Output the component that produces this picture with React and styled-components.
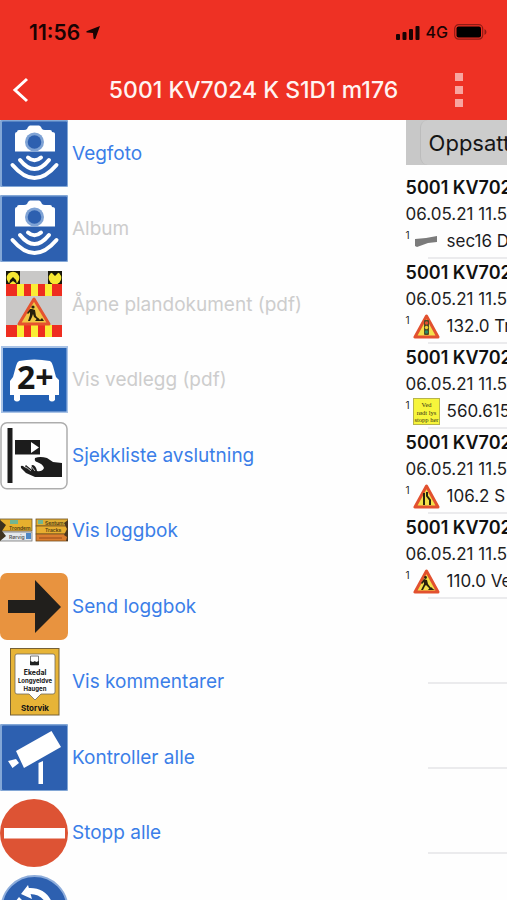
import React from 'react';
import styled, { createGlobalStyle } from 'styled-components';

const GlobalStyle = createGlobalStyle`
  * { box-sizing: border-box; }
  body {
    margin: 0;
    background: #fefefe;
    font-family: Inter, "Liberation Sans", sans-serif;
    color: #1c1c1e;
  }
  button { font: inherit; border: 0; background: none; padding: 0; cursor: pointer; }
  svg { display: block; flex: none; }
`;

const Screen = styled.div`
  display: flex;
  flex-direction: column;
  height: 100vh;
  overflow: hidden;
`;

const Header = styled.header`
  flex: none;
  background: #ee3124;
`;

const StatusBar = styled.div`
  display: flex;
  align-items: center;
  justify-content: space-between;
  height: 60px;
  padding: 4px 20px 0 29px;
  color: #1a0303;
`;

const StatusGroup = styled.div`
  display: flex;
  align-items: center;
  gap: 6px;
`;

const Clock = styled.time`
  font-size: 21px;
  font-weight: 600;
`;

const Network = styled.span`
  font-size: 16px;
  font-weight: 500;
`;

const NavBar = styled.div`
  display: grid;
  grid-template-columns: 80px 1fr 80px;
  align-items: center;
  height: 60px;
`;

const NavButton = styled.button`
  display: flex;
  align-items: center;
  justify-content: ${(p) => (p.$end ? 'center' : 'flex-start')};
  height: 44px;
  padding: ${(p) => (p.$end ? '0 16px 0 0' : '0 0 0 12px')};
`;

const Title = styled.h1`
  margin: 0;
  color: #fff4f2;
  font-size: 23px;
  font-weight: 500;
  text-align: center;
  white-space: nowrap;
`;

const Body = styled.div`
  display: flex;
  flex: 1;
  min-height: 0;
  overflow: hidden;
`;

const Drawer = styled.nav`
  flex: 0 0 80%;
  overflow: hidden;
`;

const Menu = styled.ul`
  margin: 0;
  padding: 0;
  list-style: none;
`;

const MenuRow = styled.li`
  height: 75px;
  &:nth-child(even) { height: 76px; }
`;

const MenuButton = styled.button`
  display: flex;
  align-items: center;
  gap: 4px;
  width: 100%;
  height: 68px;
  color: #3b7ee8;
  font-size: 19px;
  line-height: 28px;
  text-align: left;
  &:disabled { color: #cdcdcd; cursor: default; }
`;

const Content = styled.main`
  flex: 0 0 100%;
`;

const Segments = styled.div`
  height: 45px;
  margin-bottom: 9px;
  padding-left: 14px;
  background: #c8c8c8;
`;

const Segment = styled.button`
  width: 240px;
  height: 45px;
  padding-left: 8px;
  border-left: 1px solid #bcbcbc;
  border-radius: 8px;
  background: #cccccc;
  color: #161616;
  font-size: 22px;
  text-align: left;
`;

const Records = styled.ul`
  margin: 0;
  padding: 0;
  list-style: none;
`;

const Record = styled.li`
  display: flow-root;
  height: 85px;
  font-size: 17px;
  line-height: 27px;
  white-space: nowrap;
  &::after {
    content: "";
    display: block;
    height: 2px;
    margin: ${(p) => (p.$empty ? 83 : 2)}px 0 0 22px;
    background: #ebebed;
  }
`;

const RecordTitle = styled.div`
  height: 27px;
  font-size: 18px;
  font-weight: 600;
  color: #111;
`;

const RecordDate = styled.div`
  color: #222;
`;

const RecordSign = styled.div`
  display: flex;
  align-items: center;
  height: 27px;
  gap: 3px;
`;

const Count = styled.span`
  align-self: flex-start;
  width: 4px;
  font-size: 10px;
  line-height: 14px;
`;

const SignName = styled.span`
  padding-left: 4px;
`;

const Icon = ({ children, size = 68, box = 68 }) => (
  <svg width={size} height={size} viewBox={`0 0 ${box} ${box}`} aria-hidden="true">{children}</svg>
);

const BluePlate = () => (
  <>
    <rect width="68" height="67" rx="1" fill="#83a7d6" />
    <rect x="2" y="1.500" width="65" height="64.500" rx="1" fill="#2d60b0" />
  </>
);

const CameraIcon = () => (
  <Icon>
    <BluePlate />
    <path d="M15 14q0-2 2-2 0-2 2-2h5q2 0 3-1l1-2q1-1.500 2-1.500h9q1 0 2 1.500l1 2q1 1 3 1h5q2 0 2 2 3 0 3 2v17.500H15z" fill="#fff" />
    <circle cx="34.500" cy="22" r="9.500" fill="#7fa3d5" />
    <circle cx="34.500" cy="22" r="6.800" fill="#2d60b0" />
    <g fill="none" stroke="#fff" strokeWidth="4" strokeLinecap="round">
      <path d="M28 37.500q6.500 5.500 13 0" />
      <path d="M20 40q14.500 18 29 0" />
      <path d="M12.500 45q22 26 44 0" />
    </g>
  </Icon>
);

const Digger = () => (
  <g fill="#28200c">
    <circle cx="33" cy="36" r="1.600" />
    <path d="M32 38l3 1 1 6 3 3-1 1-4-3-1-3-1 3-2 4h-2l2-6 0-3-2 2-1-1 3-4z" />
    <path d="M35 50q3-5 5-1l2-2 2 3z" />
  </g>
);

const BarrierIcon = () => (
  <Icon>
    <rect x="6" width="56" height="66" fill="#c9c8c7" />
    <path d="M6 0h14v14H6zM48 0h14v14H48z" fill="#18170a" />
    <circle cx="13" cy="7" r="6.300" fill="#f6e832" />
    <circle cx="55" cy="7" r="6.300" fill="#f6e832" />
    <path d="M9 13l1-4 3-3 3 3 1 4-4-3zM51 0l1 2 3 3 3-3 1-2z" fill="#18170a" />
    {[13, 54].map((y) => (
      <g key={y}>
        <rect x="6" y={y} width="56" height="12" fill="#ee2d20" />
        <path d={`M17 ${y}h7v12h-7zM31 ${y}h7v12h-7zM45 ${y}h7v12h-7z`} fill="#faed35" />
      </g>
    ))}
    <path d="M34 28L19 53h30z" fill="#f1c744" stroke="#e5532f" strokeWidth="3" strokeLinejoin="round" />
    <Digger />
  </Icon>
);

const CarpoolIcon = () => (
  <Icon>
    <rect x="1" width="67" height="67" fill="#a9c3e6" />
    <rect x="3" y="2" width="63.500" height="63.500" fill="#2461b4" />
    <path d="M19 15q15-3 31 0 2 1 3 5l3 11 3 3v15h-4v5q-3 3-6 0v-5H20v5q-3 3-6 0v-5h-4V35l3-4 3-11q1-4 3-5z" fill="#fff" />
    <text x="17" y="43" fontFamily="Open Sans, sans-serif" fontWeight="700" fontSize="32" fill="#171717">2+</text>
  </Icon>
);

const TicketIcon = () => (
  <Icon>
    <rect x="1" y="0.800" width="66" height="66" rx="6" fill="#fefefe" stroke="#adadad" strokeWidth="1.500" />
    <path d="M7.500 6h5v55h-5zM15 18h25v14.500H15z" fill="#1c1c1c" />
    <path d="M31 20l8 5.500-8 5.500z" fill="#fff" />
    <path d="M35 36q5-2 12 0l6 4 9 1v14H35l-9-4-5-5q-1-3 2-2l4 3q-3-3-1-4l6 5q-2-5 1-5 3 1 4 6 5 1 7-3-1-4-7-6-3-1-2-4z" fill="#1c1c1c" />
    <path d="M26 45l5 4M31 44l4 5" stroke="#fff" strokeWidth="0.700" />
  </Icon>
);

const RoadSignsIcon = () => (
  <Icon>
    <rect y="22" width="32" height="12" fill="#e7b02e" stroke="#6b5932" strokeWidth="0.800" />
    <rect y="35" width="32" height="9" fill="#e4e8ec" stroke="#777" strokeWidth="0.800" />
    <path d="M0 23l6 5-4 6 4 5-6 5z" fill="#3d321f" />
    <rect x="10" y="23" width="8" height="4" fill="#74b592" />
    <rect x="26" y="36" width="5" height="6" fill="#4d87c4" />
    <text x="9" y="32.500" fontSize="5" fontWeight="600" fill="#4c3b14">Trondem</text>
    <text x="9" y="41.500" fontSize="5" fontWeight="600" fill="#555">Rørvig</text>
    <rect x="36" y="22" width="32" height="7" fill="#dfae35" stroke="#735222" strokeWidth="0.800" />
    <rect x="36" y="29" width="32" height="8" fill="#e8ae30" stroke="#735222" strokeWidth="0.800" />
    <rect x="36" y="37" width="32" height="7" fill="#db7d2e" stroke="#735222" strokeWidth="0.800" />
    <path d="M68 23l-4 3 3 6-3 6 3 2-1 4h2z" fill="#4a3720" />
    <rect x="38" y="23" width="5" height="4" fill="#74b592" />
    <path d="M39 41h23" stroke="#a15320" strokeWidth="1.200" />
    <text x="45" y="27.500" fontSize="5" fontWeight="600" fill="#4c3b14">Sentum</text>
    <text x="45" y="35" fontSize="5" fontWeight="600" fill="#4c3b14">Tracks</text>
  </Icon>
);

const ArrowIcon = () => (
  <Icon>
    <rect width="68" height="67" rx="7" fill="#e8933f" />
    <path d="M8 27h27V7l26 27-26 26V40H8z" fill="#211f1c" />
  </Icon>
);

const PlaceIcon = () => (
  <Icon>
    <rect x="10.500" y="0.500" width="48.500" height="66.500" fill="#e7b437" stroke="#756036" />
    <path d="M17 6h36q2 0 2 2v36q0 2-2 2H41l-6 6-6-6H17q-2 0-2-2V8q0-2 2-2z" fill="#fefefe" stroke="#716a5b" strokeWidth="0.800" />
    <path d="M30.500 8h8v9h-8z" fill="#fff" stroke="#777" />
    <path d="M30 13l3 1 2-1 1 1 3-1v4h-9z" fill="#222" />
    <g fill="#151515" fontWeight="700" textAnchor="middle">
      <text x="35" y="26.500" fontSize="7">Ekedal</text>
      <text x="35" y="34.500" fontSize="6">Longyeldve</text>
      <text x="35" y="42.500" fontSize="6">Haugen</text>
      <text x="35" y="62.500" fontSize="8">Storvik</text>
    </g>
  </Icon>
);

const SurveillanceIcon = () => (
  <Icon>
    <BluePlate />
    <path d="M16 27L51.500 7 61 23 24 44zM8 37l8-2 3 4-6.500 5zM38.500 39l4.500-2v23h-4.500z" fill="#fff" />
  </Icon>
);

const StopIcon = () => (
  <Icon>
    <circle cx="34" cy="34" r="34" fill="#dd5334" />
    <rect x="4" y="29" width="61" height="10.500" fill="#fff" />
  </Icon>
);

const RotateIcon = () => (
  <Icon>
    <circle cx="34.500" cy="34" r="33" fill="#2d60b0" stroke="#8eaddb" strokeWidth="2" />
    <path d="M28 16q15-1 21 12" fill="none" stroke="#fff" strokeWidth="6" />
    <path d="M21 19l7-9 4 14zM15 27l4-5 5 5z" fill="#fff" />
    <path d="M18 27q0 20 15 24 15 1 20-13" fill="none" stroke="#fff" strokeWidth="5" />
  </Icon>
);

const Warning = ({ children }) => (
  <Icon size={27} box={27}>
    <path d="M13.500 3L2 24h23z" fill="#f3e04a" stroke="#e2512f" strokeWidth="3" strokeLinejoin="round" />
    {children}
  </Icon>
);

const SignIcon = ({ kind }) => {
  switch (kind) {
    case 'section':
      return (
        <Icon size={27} box={27}>
          <path d="M2 11l11-1 11-2v6l-9 1-11 4-2-1z" fill="#7b7b7b" />
        </Icon>
      );
    case 'signals':
      return (
        <Warning>
          <rect x="11" y="7" width="5" height="15" rx="1" fill="#4e4a24" />
          <circle cx="13.500" cy="10" r="1.700" fill="#e2512f" />
          <circle cx="13.500" cy="14.500" r="1.700" fill="#efd43c" />
          <circle cx="13.500" cy="19" r="1.700" fill="#278b68" />
        </Warning>
      );
    case 'plate':
      return (
        <Icon size={27} box={27}>
          <rect x="0.500" y="0.500" width="26" height="26" fill="#f7f53b" stroke="#b7b44c" />
          <g fontFamily="Liberation Serif, serif" fontSize="6.500" textAnchor="middle" fill="#343314">
            <text x="13.500" y="8.500">Ved</text>
            <text x="13.500" y="16.500">rødt lys</text>
            <text x="13.500" y="24">stopp her</text>
          </g>
        </Icon>
      );
    case 'narrow':
      return (
        <Warning>
          <path d="M11 10v12M14 9v4l3 4v5" fill="none" stroke="#28250f" strokeWidth="2" />
        </Warning>
      );
    default:
      return (
        <Warning>
          <circle cx="12.500" cy="9.500" r="1.400" fill="#28200c" />
          <path d="M11 11l3 1 1 4 3 4-1 1-4-4-1 1-2 4H8l3-6v-2l-2 2-1-1zM15 22q3-5 5-1l2 1z" fill="#28200c" />
        </Warning>
      );
  }
};

const MENU = [
  { label: 'Vegfoto', Glyph: CameraIcon },
  { label: 'Album', Glyph: CameraIcon, disabled: true },
  { label: 'Åpne plandokument (pdf)', Glyph: BarrierIcon, disabled: true },
  { label: 'Vis vedlegg (pdf)', Glyph: CarpoolIcon, disabled: true },
  { label: 'Sjekkliste avslutning', Glyph: TicketIcon },
  { label: 'Vis loggbok', Glyph: RoadSignsIcon },
  { label: 'Send loggbok', Glyph: ArrowIcon },
  { label: 'Vis kommentarer', Glyph: PlaceIcon },
  { label: 'Kontroller alle', Glyph: SurveillanceIcon },
  { label: 'Stopp alle', Glyph: StopIcon },
  { label: '', name: 'Roter', Glyph: RotateIcon },
];

const RECORDS = [
  { kind: 'section', name: 'sec16 D' },
  { kind: 'signals', name: '132.0 Tr' },
  { kind: 'plate', name: '560.615' },
  { kind: 'narrow', name: '106.2 S' },
  { kind: 'works', name: '110.0 Ve' },
];

const EMPTY_ROWS = [0, 1, 2];

export default function App() {
  return (
    <Screen>
      <GlobalStyle />
      <Header>
        <StatusBar>
          <StatusGroup>
            <Clock>11:56</Clock>
            <svg width="15" height="15" viewBox="0 0 15 15" aria-hidden="true">
              <path d="M14 1L1 6q-1.500 1 0 1.500l6 .5 .5 5.500q1 1.500 2 0z" fill="currentColor" />
            </svg>
          </StatusGroup>
          <StatusGroup>
            <svg width="24" height="15" viewBox="0 0 24 15" aria-hidden="true">
              <path d="M1 9h2q1 0 1 1v4q0 1-1 1H1q-1 0-1-1v-4q0-1 1-1zM7.500 7h2q1 0 1 1v6q0 1-1 1h-2q-1 0-1-1V8q0-1 1-1zM14 4h2q1 0 1 1v9q0 1-1 1h-2q-1 0-1-1V5q0-1 1-1zM20.500 1h2q1 0 1 1v12q0 1-1 1h-2q-1 0-1-1V2q0-1 1-1z" fill="currentColor" />
            </svg>
            <Network>4G</Network>
            <svg width="33" height="16" viewBox="0 0 33 16" aria-hidden="true">
              <rect x="0.700" y="0.700" width="28" height="14.500" rx="4" fill="none" stroke="#8f1b14" strokeWidth="1.200" />
              <rect x="2.500" y="2.500" width="24.500" height="11" rx="2" fill="#000" />
              <path d="M30.500 5q2 1 2 3t-2 3z" fill="#8f1b14" />
            </svg>
          </StatusGroup>
        </StatusBar>
        <NavBar>
          <NavButton aria-label="Tilbake">
            <svg width="18" height="26" viewBox="0 0 18 26" aria-hidden="true">
              <path d="M15 2L3 13l12 11" fill="none" stroke="#fff" strokeWidth="3" />
            </svg>
          </NavButton>
          <Title>5001 KV7024 K S1D1 m176</Title>
          <NavButton $end aria-label="Meny">
            <svg width="8" height="34" viewBox="0 0 8 34" aria-hidden="true">
              <path d="M0 0h8v8H0zM0 13h8v8H0zM0 26h8v8H0z" fill="#f8a59f" />
            </svg>
          </NavButton>
        </NavBar>
      </Header>
      <Body>
        <Drawer aria-label="Meny">
          <Menu>
            {MENU.map(({ label, name, Glyph, disabled }) => (
              <MenuRow key={label || name}>
                <MenuButton disabled={disabled} aria-label={name}>
                  <Glyph />
                  {label}
                </MenuButton>
              </MenuRow>
            ))}
          </Menu>
        </Drawer>
        <Content>
          <Segments>
            <Segment>Oppsatt</Segment>
          </Segments>
          <Records>
            {RECORDS.map(({ kind, name }) => (
              <Record key={kind}>
                <RecordTitle>5001 KV7024</RecordTitle>
                <RecordDate>06.05.21 11.56</RecordDate>
                <RecordSign>
                  <Count>1</Count>
                  <SignIcon kind={kind} />
                  <SignName>{name}</SignName>
                </RecordSign>
              </Record>
            ))}
            {EMPTY_ROWS.map((n) => (
              <Record key={n} $empty />
            ))}
          </Records>
        </Content>
      </Body>
    </Screen>
  );
}
